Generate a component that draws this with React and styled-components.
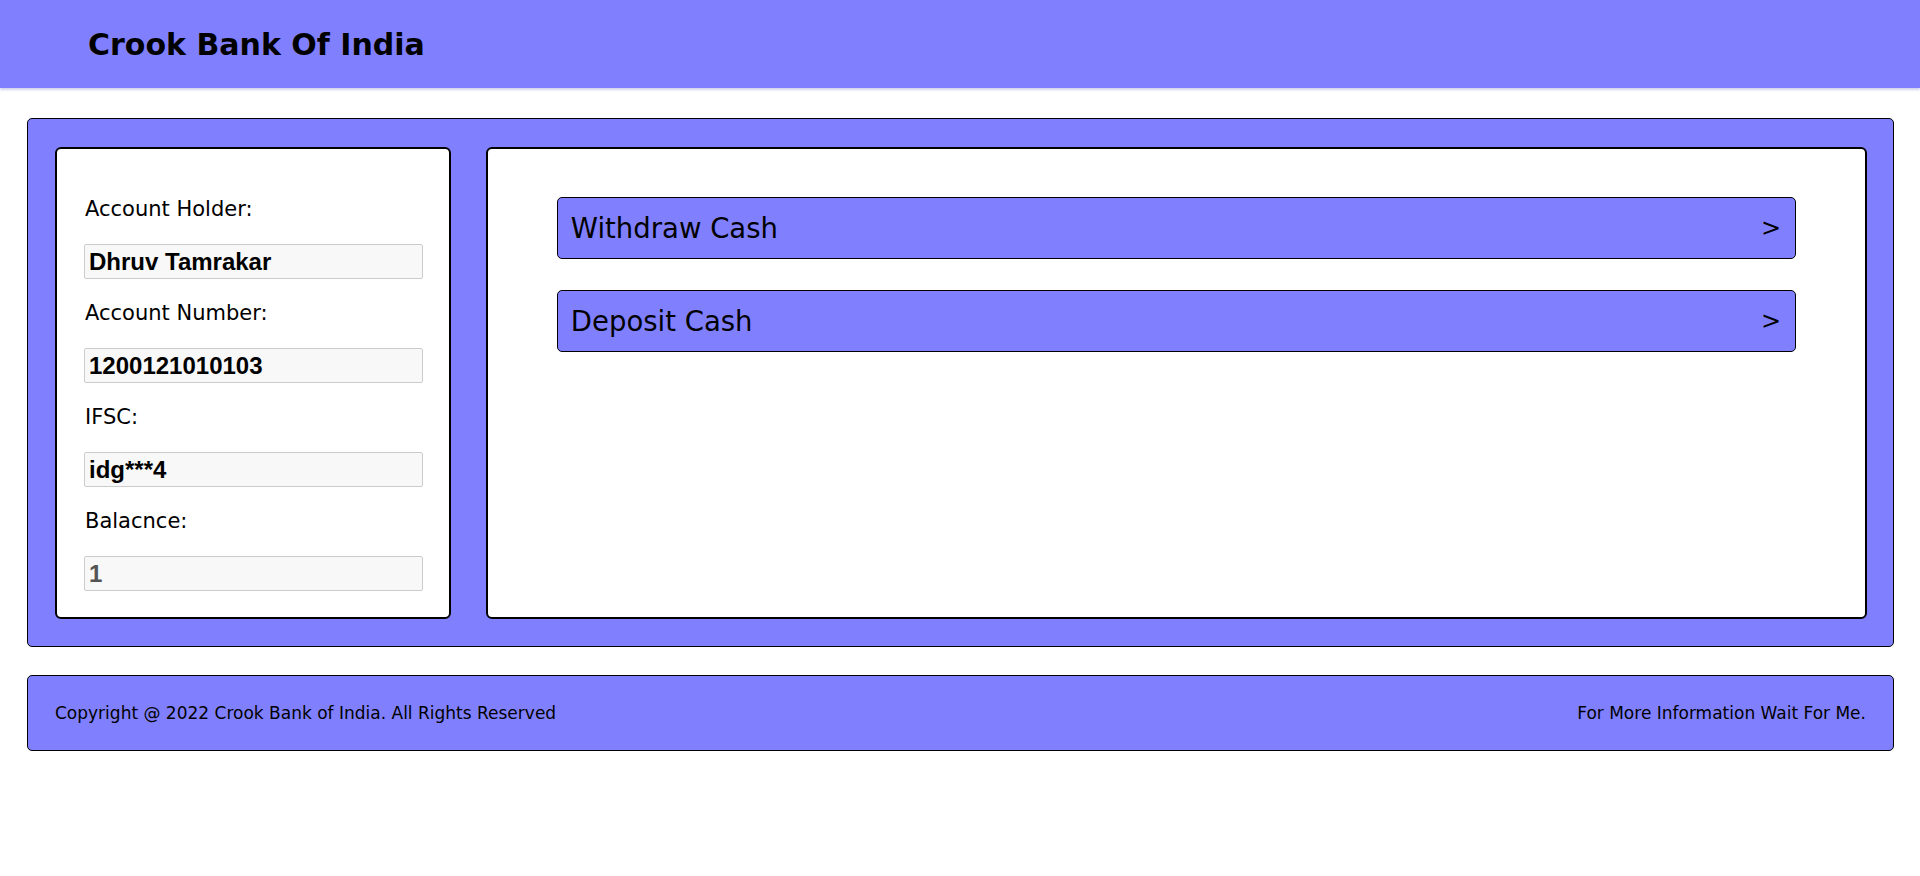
import React from "react";
import styled, { createGlobalStyle } from "styled-components";

const GlobalStyle = createGlobalStyle`
  body {
    margin: 0;
    background: #ffffff;
    font-family: "DejaVu Sans", sans-serif;
    color: #000;
  }
`;

const details = [
  { label: "Account Holder:", value: "Dhruv Tamrakar" },
  { label: "Account Number:", value: "1200121010103" },
  { label: "IFSC:", value: "idg***4" },
  { label: "Balacnce:", value: "1", disabled: true },
];

const actions = ["Withdraw Cash", "Deposit Cash"];

const Header = styled.header`
  height: 88px;
  display: flex;
  align-items: center;
  padding-left: 88px;
  background: #8080ff;
  box-shadow: 0 2px 2px #d4d4ee;
`;

const Title = styled.h1`
  margin: 0;
  font-family: "DejaVu Sans", sans-serif;
  font-size: 30px;
  font-weight: bold;
  color: #000;
`;

const Main = styled.main`
  margin: 30px 26px 0 27px;
  padding: 28px 26px 27px 27px;
  display: flex;
  gap: 35px;
  background: #8080ff;
  border: 1px solid #000;
  border-radius: 5px;
`;

const Card = styled.section`
  background: #fff;
  border: 2px solid #000;
  border-radius: 6px;
  box-sizing: border-box;
`;

const InfoCard = styled(Card)`
  width: 396px;
  flex: none;
  padding: 48px 26px 26px 27px;
`;

const ActionCard = styled(Card)`
  flex: 1;
  padding-top: 48px;
  display: flex;
  flex-direction: column;
  align-items: center;
  gap: 31px;
`;

const Field = styled.div`
  & + & {
    margin-top: 22px;
  }
`;

const Label = styled.div`
  font-size: 21px;
  line-height: 24px;
  margin-bottom: 23px;
  padding-left: 1px;
`;

const Value = styled.input`
  display: block;
  width: 100%;
  height: 35px;
  box-sizing: border-box;
  padding: 0 4px;
  border: 1px solid #cccccc;
  border-radius: 2px;
  background: #f8f8f8;
  font-family: "Liberation Sans", Arial, sans-serif;
  font-size: 24px;
  font-weight: bold;
  color: ${(p) => (p.disabled ? "#545454" : "#000")};
  outline: none;
`;

const ActionButton = styled.button`
  width: 90%;
  height: 62px;
  box-sizing: border-box;
  display: flex;
  align-items: center;
  justify-content: space-between;
  padding: 0 14px 0 13px;
  background: #8080ff;
  border: 1px solid #000;
  border-radius: 5px;
  font-family: "DejaVu Sans", sans-serif;
  font-size: 27.5px;
  color: #000;
  cursor: pointer;
`;

const Arrow = styled.span`
  font-size: 24px;
`;

const Footer = styled.footer`
  margin: 28px 26px 0 27px;
  height: 76px;
  box-sizing: border-box;
  padding: 0 27px;
  display: flex;
  align-items: center;
  justify-content: space-between;
  background: #8080ff;
  border: 1px solid #000;
  border-radius: 5px;
  font-size: 17px;
`;

export default function App() {
  return (
    <>
      <GlobalStyle />
      <Header>
        <Title>Crook Bank Of India</Title>
      </Header>
      <Main>
        <InfoCard>
          {details.map((d) => (
            <Field key={d.label}>
              <Label>{d.label}</Label>
              <Value value={d.value} readOnly disabled={d.disabled} />
            </Field>
          ))}
        </InfoCard>
        <ActionCard>
          {actions.map((a) => (
            <ActionButton key={a}>
              <span>{a}</span>
              <Arrow>&gt;</Arrow>
            </ActionButton>
          ))}
        </ActionCard>
      </Main>
      <Footer>
        <span>Copyright @ 2022 Crook Bank of India. All Rights Reserved</span>
        <span>For More Information Wait For Me.</span>
      </Footer>
    </>
  );
}
